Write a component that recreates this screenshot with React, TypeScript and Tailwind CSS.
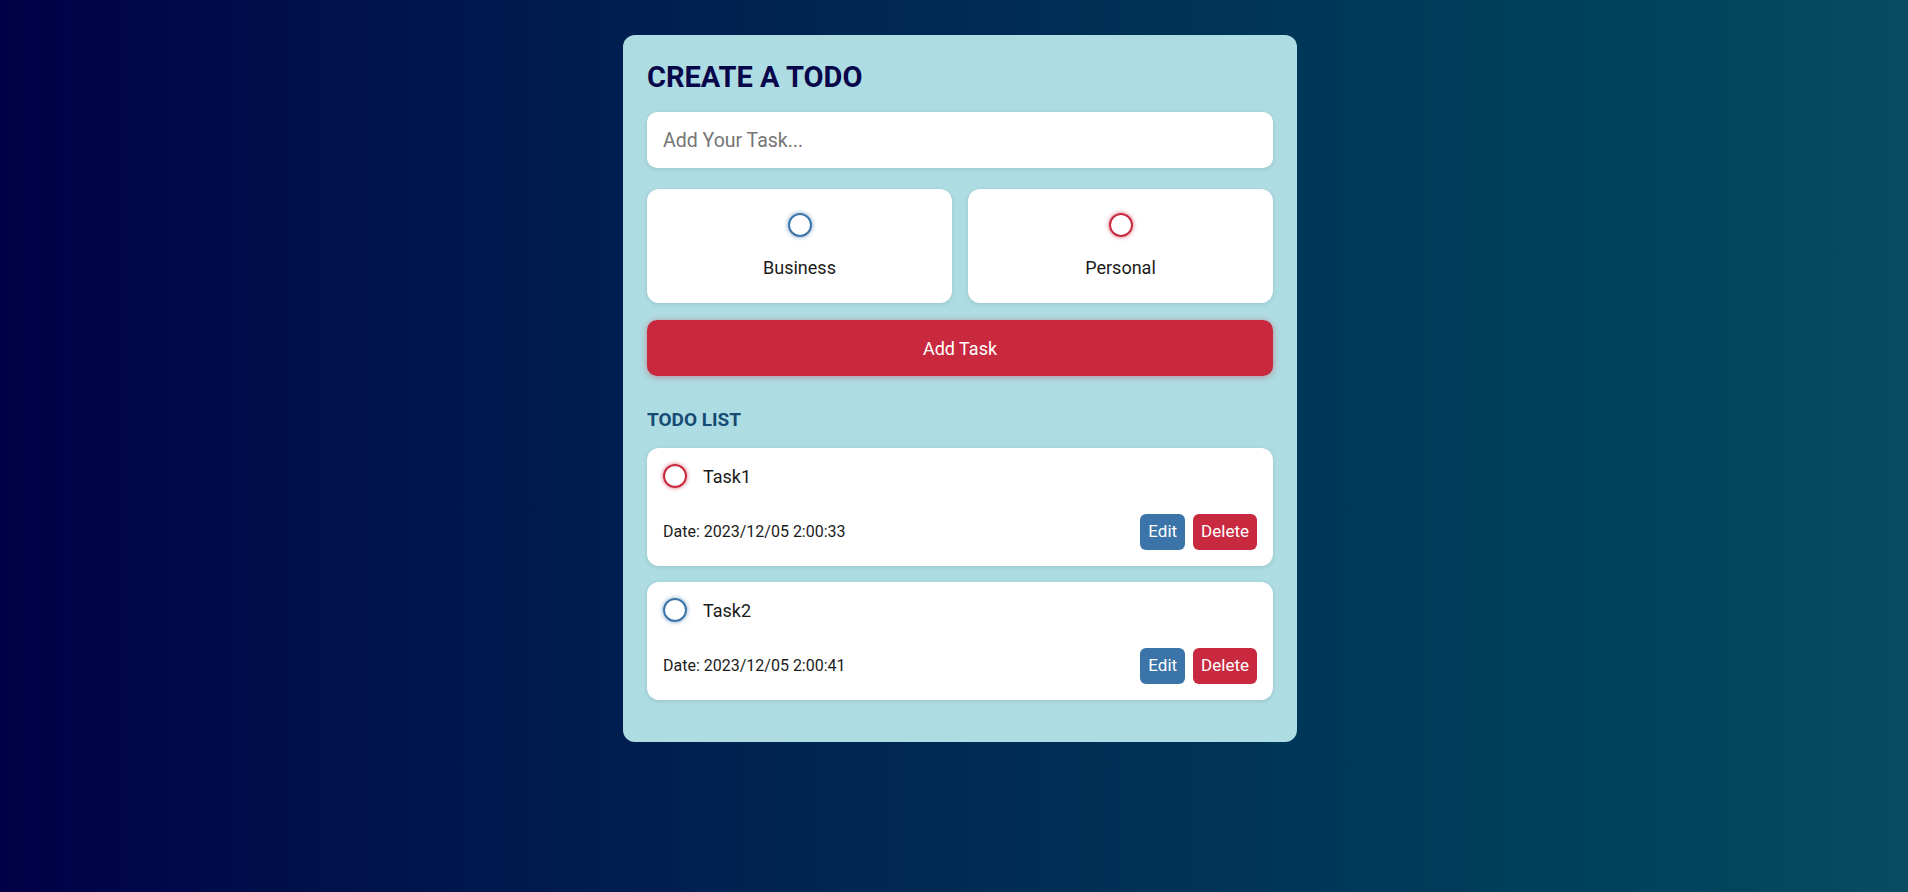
const TODOS = [
	{ id: 1, title: 'Task1', date: '2023/12/05 2:00:33', kind: 'personal' },
	{ id: 2, title: 'Task2', date: '2023/12/05 2:00:41', kind: 'business' },
];

function Bubble({ kind }: { kind: string }) {
	return kind === 'business' ? (
		<span className="block w-6 h-6 rounded-full border-2 border-[#3a74a8] shadow-[0_0_4px_rgba(58,116,168,0.7)]" />
	) : (
		<span className="block w-6 h-6 rounded-full border-2 border-[#c8293e] shadow-[0_0_4px_rgba(200,41,62,0.7)]" />
	);
}

export default function App() {
	return (
		<div
			className="min-h-screen w-full flex justify-center items-start bg-gradient-to-r from-[#010046] to-[#074c60] pt-[35px] pl-[12px]"
			style={{ fontFamily: 'Roboto, "Liberation Sans", sans-serif' }}
		>
			<div className="w-[674px] bg-[#aedce3] rounded-xl px-6 pt-[26px] pb-[42px]">
				<h1 className="text-[29px] leading-[33px] font-bold text-[#07074a]">
					CREATE A TODO
				</h1>

				<input
					type="text"
					placeholder="Add Your Task..."
					className="mt-[18px] block w-full h-14 rounded-[10px] bg-white px-4 text-[19.5px] text-[#222] placeholder:text-[#757575] outline-none shadow-[0_1px_4px_rgba(0,0,0,0.12)]"
				/>

				<div className="mt-[21px] grid grid-cols-2 gap-[16px]">
					{[
						{ k: 'business', label: 'Business' },
						{ k: 'personal', label: 'Personal' },
					].map((c) => (
						<label
							key={c.k}
							className="flex flex-col items-center bg-white rounded-xl pt-6 pb-6 shadow-[0_1px_4px_rgba(0,0,0,0.12)]"
						>
							<Bubble kind={c.k} />
							<span className="mt-5 text-[18px] leading-[22px] text-[#1b1b1b]">
								{c.label}
							</span>
						</label>
					))}
				</div>

				<button className="mt-[17px] w-full h-14 rounded-[10px] bg-[#c8293e] text-white text-[18px] shadow-[0_1px_6px_rgba(200,41,62,0.45)]">
					Add Task
				</button>

				<h2 className="mt-[33px] text-[19px] leading-[22px] font-bold text-[#164b74]">
					TODO LIST
				</h2>

				<div className="mt-[17px] flex flex-col gap-4">
					{TODOS.map((t) => (
						<div
							key={t.id}
							className="bg-white rounded-xl p-4 shadow-[0_1px_4px_rgba(0,0,0,0.12)]"
						>
							<div className="flex items-center gap-4 h-6">
								<Bubble kind={t.kind} />
								<span className="text-[18px] text-[#1b1b1b]">{t.title}</span>
							</div>
							<div className="mt-[26px] flex items-center justify-between">
								<span className="text-[16px] text-[#1b1b1b]">Date: {t.date}</span>
								<div className="flex gap-2">
									<button className="h-9 px-2 rounded-md bg-[#3a74a8] text-white text-[17px]">
										Edit
									</button>
									<button className="h-9 px-2 rounded-md bg-[#c8293e] text-white text-[17px]">
										Delete
									</button>
								</div>
							</div>
						</div>
					))}
				</div>
			</div>
		</div>
	);
}
